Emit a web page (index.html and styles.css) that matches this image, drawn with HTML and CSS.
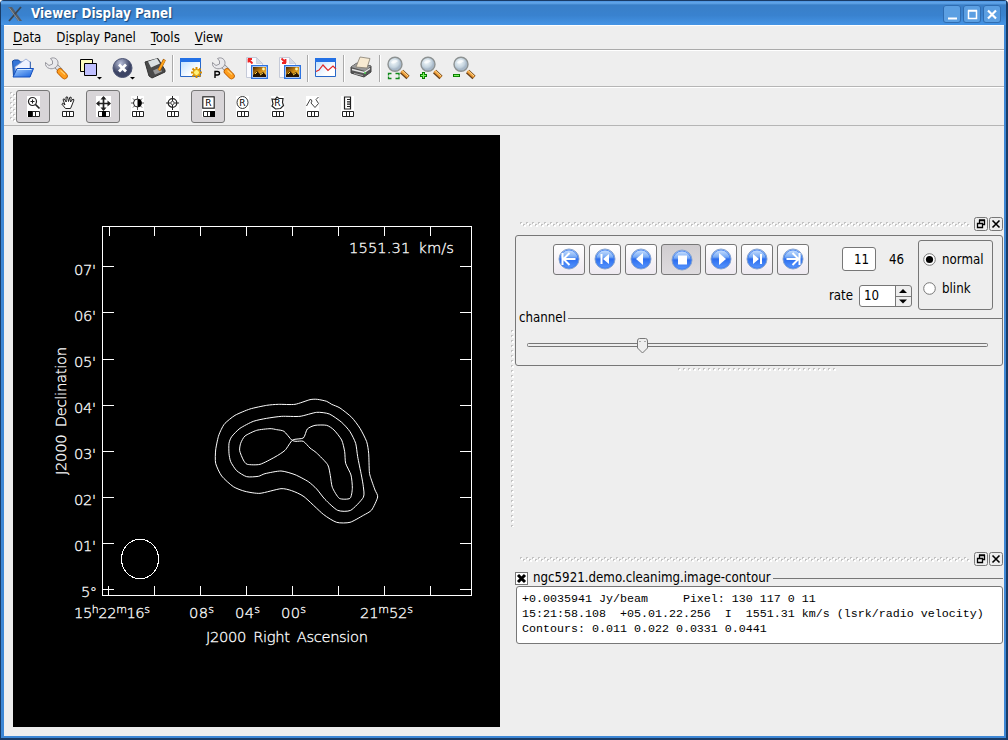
FILE: index.html
```html
<!DOCTYPE html>
<html lang="en">
<head>
<meta charset="utf-8">
<title>Viewer Display Panel</title>
<link rel="stylesheet" href="styles.css">
</head>
<body>
<svg class="defs" width="0" height="0">
  <defs>
    <linearGradient id="blue" x1="0" y1="0" x2="0" y2="1"><stop offset="0" stop-color="#d5e8ff"/><stop offset=".4" stop-color="#78aaf5"/><stop offset=".5" stop-color="#2b6cee"/><stop offset="1" stop-color="#5c9aff"/></linearGradient>
    <linearGradient id="folder" x1="0" y1="0" x2="1" y2="1"><stop offset="0" stop-color="#a5d0ff"/><stop offset="1" stop-color="#1560dd"/></linearGradient>
    <linearGradient id="sheet" x1="0" y1="0" x2="1" y2="1"><stop offset="0" stop-color="#b8dcff"/><stop offset=".7" stop-color="#fff"/></linearGradient>
    <linearGradient id="photo" x1="0" y1="0" x2="1" y2="1"><stop offset="0" stop-color="#4a2500"/><stop offset=".5" stop-color="#d08a10"/><stop offset="1" stop-color="#ffd050"/></linearGradient>
    <radialGradient id="glass" cx=".4" cy=".35"><stop offset="0" stop-color="#f4fafc"/><stop offset=".75" stop-color="#c4d3de"/><stop offset="1" stop-color="#a8b8c8"/></radialGradient>
    <radialGradient id="slate" cx=".4" cy=".25"><stop offset="0" stop-color="#b9c0da"/><stop offset="1" stop-color="#3d4565"/></radialGradient>
    <symbol id="wrench" viewBox="0 0 33 34">
      <path d="M14 13 L21 20" stroke="#888" stroke-width="5"/>
      <path d="M14 13 L21 20" stroke="#e2e2e6" stroke-width="3.400"/>
      <path d="M10.500 7.500 c4-2 8 1 7.500 5 c-.5 4-5 6-8.500 5 c-3-.8-4.500-3-4-6 l3.500 3 l3.500-1.500 v-3z" fill="#e9e9ec" stroke="#8d8d95" stroke-width=".9"/>
      <path d="M20 20.500 L24.500 25" stroke="#b85b00" stroke-width="6.500" stroke-linecap="round"/>
      <path d="M20 20.500 L24.500 25" stroke="#ff9d1c" stroke-width="5" stroke-linecap="round"/>
      <path d="M20.500 19.500 L25 23.500" stroke="#ffd070" stroke-width="1.200"/>
    </symbol>
    <symbol id="lens" viewBox="0 0 33 34">
      <path d="M20.500 20.500 L27 26.500" stroke="#684018" stroke-width="4.600"/>
      <path d="M20.500 20 L27 26" stroke="#ee9c38" stroke-width="2.800"/>
      <path d="M21 19.500 L27 25" stroke="#ffdf98" stroke-width="1"/>
      <circle cx="14" cy="13.300" r="7" fill="url(#glass)" stroke="#8d9292" stroke-width="1.400"/>
      <path d="M10 12 c1-3 5-4 7-2 c-2 2-5 3-7 2z" fill="#fff" opacity=".7"/>
    </symbol>
    <symbol id="picture" viewBox="0 0 33 34">
      <path d="M6.500 6.500 h10 l6 6 v14 h-16z" fill="#fbfbff" stroke="#c5cad8"/>
      <path d="M16.500 6.500 v6 h6z" fill="#d6dbe7" stroke="#bfc4d0" stroke-width=".6"/>
      <rect x="11.700" y="14.700" width="15.600" height="12.600" fill="#fff" stroke="#2d73e0" stroke-width="1.400"/>
      <rect x="13" y="16" width="13" height="10" fill="url(#photo)"/>
      <path d="M13 24 l4-4 l3 3 l3-2 l3 3 v2 h-13z" fill="#281500"/><path d="M15 23 l2-2 M20 24 l3-2" stroke="#ffd84c"/>
      <circle cx="23.500" cy="18" r="1.400" fill="#fff8b0"/>
    </symbol>
    <symbol id="cells" viewBox="0 0 12 6"><path d="M.5 .5 h11 v5 h-11z M4.500 .5 v5 M7.500 .5 v5" fill="#fff" stroke="#222"/></symbol>
    <symbol id="ball" viewBox="0 0 22 22"><circle cx="11" cy="11" r="10" fill="url(#blue)" stroke="#89a4cd"/><circle cx="11" cy="11" r="9" fill="none" stroke="#3f7df0" stroke-width=".8"/></symbol>
    <symbol id="undock" viewBox="0 0 14 14"><rect x=".5" y=".5" width="13" height="13" rx="2" fill="#eee" stroke="#777"/><path d="M5.500 6 V3.500 h5 v4 H8.500 M5 3 h6 M3.500 6.500 h5 v4 h-5z M3 6.500 h6" fill="none" stroke="#000" stroke-width="1.300"/></symbol>
    <symbol id="shut" viewBox="0 0 14 14"><rect x=".5" y=".5" width="13" height="13" rx="2" fill="#eee" stroke="#777"/><path d="M3.500 3.500 l7 7 m0-7 l-7 7" stroke="#000" stroke-width="1.600"/></symbol>
    <pattern id="dots" width="6" height="5" patternUnits="userSpaceOnUse"><path d="M0 0h2v2h-2z M3 2h2v2h-2z" fill="#c3c3c3"/><path d="M1 1h2v2h-2z M4 3h2v2h-2z" fill="#fff"/></pattern>
    <pattern id="beads" width="5" height="5" patternUnits="userSpaceOnUse"><path d="M0 0h2v2h-2z" fill="#c3c3c3"/><path d="M1 1h2v2h-2z" fill="#fff"/></pattern>
  </defs>
</svg>
<div class="window">
  <header class="titlebar">
    <svg class="logo" width="16" height="16"><path d="M1 1 h4 l10 14 h-4z" fill="#555d68"/><path d="M14 1 L2 15" stroke="#3d4651" stroke-width="1.800"/><path d="M2 1.500 L12 15" stroke="#9aa2a5" stroke-width=".8"/></svg>
    <h1>Viewer Display Panel</h1>
    <div class="winbuttons">
      <svg width="18" height="18"><path d="M5 13.500 h9" stroke="#fff" stroke-width="2"/></svg>
      <svg width="18" height="18"><path d="M5.500 6 h8 v7.500 h-8z M5 5.500 h9" fill="none" stroke="#fff" stroke-width="1.500"/></svg>
      <svg width="18" height="18"><path d="M5 5.500 l8 8 m0-8 l-8 8" stroke="#fff" stroke-width="2.200"/></svg>
    </div>
  </header>
  <div class="client">
    <nav class="menubar"><span><u>D</u>ata</span><span>D<u>i</u>splay Panel</span><span><u>T</u>ools</span><span><u>V</u>iew</span></nav>

    <div class="toolbar main-tools">
      <svg width="33" height="34" viewBox="7 51 33 34"><path d="M12.500 61 l2-1 h4 l2 2 h10 v14 h-17z" fill="#3676d8" stroke="#174ba3"/><path d="M15 67 l11-8 l4 3 v10 h-14z" fill="#eef2ff" stroke="#92a4d0" stroke-width=".8"/><path d="M17 68.500 h16.500 l-3.500 8.500 h-17z" fill="url(#folder)" stroke="#1550bf"/><path d="M17.500 69.500 h14" stroke="#d8edff"/></svg>
      <svg width="33" height="34"><use href="#wrench" width="33" height="34"/></svg>
      <svg width="33" height="34" viewBox="73 51 33 34"><path d="M80.500 59.500 h12 v12 h-12z" fill="#ffffc0" stroke="#000"/><path d="M84.500 63.500 h12 v12 h-12z" fill="#c0c0ff" stroke="#000"/><path d="M97 77 h5 l-2.500 2.500z"/></svg>
      <svg width="33" height="34" viewBox="106 51 33 34"><circle cx="122.500" cy="68" r="9.500" fill="url(#slate)" stroke="#4c5474"/><path d="M119 64.500 l7 7 m0-7 l-7 7" stroke="#fff" stroke-width="2.800"/><path d="M130 77 h5 l-2.500 2.500z"/></svg>
      <svg width="33" height="34" viewBox="139 51 33 34"><path d="M145 62 l13-3.500 l7 11.500 v2 l-13 6 l-3-2z" fill="#4a4a4a" stroke="#333"/><path d="M148 61.500 l9-3 l3 5 l-9 4z" fill="#d9dfe2"/><path d="M153 70.500 l7-3 l2 4 l-7 3z" fill="#999"/><path d="M164.500 59.500 l-5.500 11" stroke="#9c5300" stroke-width="3"/><path d="M164.500 60 l-5.500 10" stroke="#ffa51c" stroke-width="2"/></svg>
      <i class="sep first"></i>
      <svg width="33" height="34" viewBox="174 51 33 34"><path d="M180.500 58.500 h20 v18 h-20z" fill="url(#sheet)" stroke="#2767c8"/><path d="M180 58 h21 v4 h-21z" fill="#2471e5"/><path d="M196.500 67 v11 M191 72.500 h11 M192.500 68.500 l8 8 m0-8 l-8 8" stroke="#d88d00" stroke-width="2"/><circle cx="196.500" cy="72.500" r="3" fill="#fff27a" stroke="#e09b00"/></svg>
      <svg width="33" height="34"><use href="#wrench" width="33" height="34"/><path d="M8 27 v-6.500 h2.500 q2 0 2 1.800 q0 1.700-2 1.700 h-2" fill="none" stroke="#000" stroke-width="1.400"/></svg>
      <svg width="33" height="34"><use href="#picture" width="33" height="34"/><path d="M8 8 h4 M8.500 7.500 v4 M8.500 8.500 l4 4" stroke="#e22" stroke-width="1.800"/></svg>
      <svg width="33" height="34"><use href="#picture" width="33" height="34"/><path d="M8.500 7.500 l4 4 M9 12 h4 M12.500 8 v4" stroke="#e22" stroke-width="1.800"/></svg>
      <i class="sep"></i>
      <svg width="33" height="34" viewBox="309 51 33 34"><path d="M315.500 58.500 h20 v18 h-20z" fill="url(#sheet)" stroke="#2767c8"/><path d="M315 58 h21 v4 h-21z" fill="#2471e5"/><path d="M316 71.500 l3-1.500 l4-5 l5 5.500 l5-4.500 l3 3" fill="none" stroke="#e02828" stroke-width="1.200"/></svg>
      <i class="sep"></i>
      <svg width="33" height="34" viewBox="345 51 33 34"><path d="M351 67 l6-4 l14 3 v6 l-7 5 l-13-4z" fill="#555" stroke="#444"/><path d="M351 67 l6-4 l14 3 l-6 5z" fill="#999"/><path d="M356 67 l4-10 l10 1.500 l-3 9.500z" fill="#f7ead2" stroke="#857e70" stroke-width=".8"/><path d="M352 69.500 l12 3 l6-4" fill="none" stroke="#e6e6e6" stroke-width="1.500"/><path d="M354 73.500 l9 2" stroke="#aaa"/><circle cx="365" cy="73" r=".9" fill="#48da50"/></svg>
      <i class="sep"></i>
      <svg width="33" height="34"><use href="#lens" width="33" height="34"/><path d="M7.500 24.500 v-2 h3 M14.500 22.500 h3.500 v2 M7.500 25.500 v2 h3 M14.500 27.500 h3.500 v-2" fill="none" stroke="#128a1c" stroke-width="1.300"/></svg>
      <svg width="33" height="34"><use href="#lens" width="33" height="34"/><path d="M9.500 21 v7 M6 24.500 h7" stroke="#087a00" stroke-width="3"/><path d="M9.500 22 v5 M7 24.500 h5" stroke="#7cf45e" stroke-width="1.200"/></svg>
      <svg width="33" height="34"><use href="#lens" width="33" height="34"/><path d="M6 24.500 h7" stroke="#087a00" stroke-width="3"/><path d="M7 24.500 h5" stroke="#7cf45e" stroke-width="1.200"/></svg>
    </div>

    <div class="toolbar mouse-tools">
      <svg class="grip" width="6" height="30"><rect width="6" height="30" fill="url(#dots)"/></svg>
      <span class="tool on"><svg width="14" height="21"><rect width="13" height="21" fill="#fff"/><circle cx="5.500" cy="5.500" r="4" fill="none" stroke="#222" stroke-width="1.200"/><path d="M3.500 5.500 h4 M5.500 3.500 v4" stroke="#222"/><path d="M8.500 8.500 l4 4" stroke="#222" stroke-width="1.700"/><use href="#cells" x="1" y="15" width="12" height="6"/><path d="M1 15 h4 v6 h-4z"/></svg></span>
      <span class="tool"><svg width="14" height="21"><path d="M4.500 12.500 L.8 8 l1-.8 L4 9 L2 3.500 l1.200-.7 l2 3.200 L5 1 h1.500 l1 4.500 L9 1 l1.300 .5 l-.8 4.500 l2.500-3 l1 .8 L11 9 l-1.500 3.500z" fill="#fff" stroke="#222"/><use href="#cells" x="1" y="15" width="12" height="6"/></svg></span>
      <span class="tool on"><svg width="15" height="21"><rect width="15" height="21" fill="#fff"/><path d="M7.500 1 v13 M1 7.500 h13" stroke="#222" stroke-width="1.700"/><path d="M7.500 0 l3 3.500 h-6z M7.500 15 l3-3.500 h-6z M0 7.500 l3.500-3 v6z M15 7.500 l-3.500-3 v6z" fill="#222"/><use href="#cells" x="2" y="15" width="12" height="6"/><path d="M6 15 h4 v6 h-4z"/></svg></span>
      <span class="tool"><svg width="14" height="21"><rect width="13" height="21" fill="#fff"/><path d="M6.500 0 v14 M0 7 h13 M2 2.500 l9 9 m0-9 l-9 9" stroke="#444" stroke-width=".9"/><circle cx="6.500" cy="7" r="4" fill="#fff" stroke="#222"/><path d="M6.500 3 a4 4 0 0 1 0 8z"/><use href="#cells" x="1" y="15" width="12" height="6"/></svg></span>
      <span class="tool"><svg width="14" height="21"><rect width="13" height="21" fill="#fff"/><circle cx="6.500" cy="7" r="4.300" fill="none" stroke="#222" stroke-width="1.200"/><circle cx="6.500" cy="7" r="1.700" fill="none" stroke="#444"/><path d="M6.500 0 v5 M6.500 9 v5 M0 7 h4.500 M8.500 7 h4.500" stroke="#222"/><use href="#cells" x="1" y="15" width="12" height="6"/></svg></span>
      <span class="tool on"><svg width="13" height="21"><rect width="13" height="21" fill="#fff"/><rect x=".8" y=".8" width="11.400" height="11.400" fill="none" stroke="#222" stroke-width="1.200"/><text class="mark" x="6.500" y="10">R</text><use href="#cells" x="1" y="15" width="12" height="6"/><path d="M8 15 h5 v6 h-5z"/></svg></span>
      <span class="tool"><svg width="14" height="21"><rect width="13" height="21" fill="#fff"/><ellipse cx="6.500" cy="6.500" rx="5.500" ry="6" fill="none" stroke="#333"/><text class="mark" x="6.500" y="10">R</text><use href="#cells" x="1" y="15" width="12" height="6"/></svg></span>
      <span class="tool"><svg width="14" height="21"><rect width="13" height="21" fill="#fff"/><path d="M1 3 l3 .3 l2-2.300 l2 1.500 h4 l-.5 4 l1 3 l-3 3 l-5 .5 l-3.500-3 l1-2z" fill="none" stroke="#222" stroke-width="1.200"/><text class="mark" x="6.500" y="10">R</text><use href="#cells" x="1" y="15" width="12" height="6"/></svg></span>
      <span class="tool"><svg width="14" height="21"><rect width="13" height="21" fill="#fff"/><path d="M.5 10 l4-7 l1.500 2 l-1 2 l4 4.500 l3.500-4 l-2.500-4 l2.500-2.500" fill="none" stroke="#444"/><use href="#cells" x="1" y="15" width="12" height="6"/></svg></span>
      <span class="tool"><svg width="14" height="21"><rect width="13" height="21" fill="#fff"/><path d="M3.500 1 h6 v12 h-6z M6 3.500 h3 M6 5.800 h3 M6 8.200 h3 M6 10.500 h3" fill="none" stroke="#222" stroke-width="1.200"/><use href="#cells" x="1" y="15" width="12" height="6"/></svg></span>
    </div>

    <main class="workspace">
      <svg class="plot" width="487" height="592" viewBox="13 135 487 592">
        <g class="axes">
          <path d="M102.500 226.500 H471.500 V595.500 H102.500z"/>
          <path d="M109.500 227v9 M154.500 227v9 M200.500 227v9 M246.500 227v9 M292.500 227v9 M338.500 227v9 M384.500 227v9 M430.500 227v9"/>
          <path d="M108.500 586v9 M154.500 586v9 M200.500 586v9 M246.500 586v9 M292.500 586v9 M338.500 586v9 M384.500 586v9 M430.500 586v9"/>
          <path d="M103 266.500h11 M103 312.500h11 M103 359.500h11 M103 405.500h11 M103 451.500h11 M103 497.500h11 M103 543.500h11 M103 589.500h11"/>
          <path d="M460 266.500h11 M460 312.500h11 M460 359.500h11 M460 405.500h11 M460 451.500h11 M460 497.500h11 M460 543.500h11 M460 589.500h11"/>
          <ellipse cx="140" cy="559" rx="18.500" ry="19.700"/>
        </g>
        <g class="contours" id="contours" transform="translate(200 380) scale(.33333)"></g>
        <g class="labels">
          <text x="349" y="253" textLength="105">1551.31 km/s</text>
          <text x="74" y="275" textLength="22">07'</text>
          <text x="74" y="321" textLength="22">06'</text>
          <text x="74" y="367" textLength="22">05'</text>
          <text x="74" y="413" textLength="22">04'</text>
          <text x="74" y="459" textLength="22">03'</text>
          <text x="74" y="505" textLength="22">02'</text>
          <text x="74" y="551" textLength="22">01'</text>
          <text x="81" y="597" textLength="16">5°</text>
          <text x="74" y="618" textLength="76">15<tspan class="sup" dy="-5">h</tspan><tspan dy="5">22</tspan><tspan class="sup" dy="-5">m</tspan><tspan dy="5">16</tspan><tspan class="sup" dy="-5">s</tspan></text>
          <text x="189" y="618" textLength="25">08<tspan class="sup" dy="-5">s</tspan></text>
          <text x="235" y="618" textLength="25">04<tspan class="sup" dy="-5">s</tspan></text>
          <text x="281" y="618" textLength="25">00<tspan class="sup" dy="-5">s</tspan></text>
          <text x="360" y="618" textLength="53">21<tspan class="sup" dy="-5">m</tspan><tspan dy="5">52</tspan><tspan class="sup" dy="-5">s</tspan></text>
          <text x="206" y="642" textLength="162">J2000 Right Ascension</text>
          <text transform="translate(66 475) rotate(-90)" textLength="128">J2000 Declination</text>
        </g>
      </svg>
      <svg class="vsplit" width="5" height="197"><rect width="5" height="197" fill="url(#beads)"/></svg>

      <section class="docks">
        <div class="dockhead"><svg width="450" height="5"><rect width="450" height="5" fill="url(#dots)"/></svg><svg width="14" height="14"><use href="#undock" width="14" height="14"/></svg><svg width="14" height="14"><use href="#shut" width="14" height="14"/></svg></div>
        <div class="animator">
          <div class="controls">
            <div class="player">
              <button><svg width="22" height="22"><use href="#ball"/><path d="M5.500 11 H17.500 M11.500 5 L5.500 11 l6 6 M4.500 5 v12" fill="none" stroke="#fff" stroke-width="2"/></svg></button>
              <button><svg width="22" height="22"><use href="#ball"/><path d="M6.500 6 h2 v10 h-2z M15 6 v10 l-6-5z" fill="#fff"/></svg></button>
              <button><svg width="22" height="22"><use href="#ball"/><path d="M13 5 v12 l-7-6z" fill="#fff"/></svg></button>
              <button class="stop"><svg width="22" height="22"><use href="#ball"/><path d="M7 6.500 h9 v9 h-9z" fill="#fff"/></svg></button>
              <button><svg width="22" height="22"><use href="#ball"/><path d="M9 5 v12 l7-6z" fill="#fff"/></svg></button>
              <button><svg width="22" height="22"><use href="#ball"/><path d="M14 6 h2 v10 h-2z M7 6 v10 l6-5z" fill="#fff"/></svg></button>
              <button><svg width="22" height="22"><use href="#ball"/><path d="M4.500 11 H16.500 M10.500 5 l6 6 l-6 6 M17.500 5 v12" fill="none" stroke="#fff" stroke-width="2"/></svg></button>
            </div>
            <div class="numbers">
              <div class="frame"><span class="field">11</span><span>46</span></div>
              <div class="rate"><span>rate</span><span class="spin"><b>10</b><svg width="16" height="20"><path d="M.5 0 v20 M1 10.500 h15" stroke="#777"/><path d="M4 7 h8 l-4-4z M4 13.500 h8 l-4 4z"/></svg></span></div>
            </div>
            <div class="mode">
              <label><svg width="13" height="13"><circle cx="6.500" cy="6.500" r="5.800" fill="#fff" stroke="#777"/><circle cx="6.500" cy="6.500" r="3.600"/></svg><span>normal</span></label>
              <label><svg width="13" height="13"><circle cx="6.500" cy="6.500" r="5.800" fill="#fff" stroke="#777"/></svg><span>blink</span></label>
            </div>
          </div>
          <div class="caption"><span>channel</span><i></i></div>
          <svg class="slider" width="461" height="16"><rect x=".5" y="5.500" width="460" height="3" rx="1" fill="#eee" stroke="#777"/><path d="M110.500 3 q0-2.500 2-2.500 h6 q2 0 2 2.500 v7 l-5 5 l-5-5z" fill="#eee" stroke="#777"/><path d="M112 3.500 h2 M117 3.500 h2" stroke="#aaa"/></svg>
        </div>
        <svg class="hsplit" width="158" height="4"><rect width="158" height="4" fill="url(#beads)"/></svg>
        <div class="dockhead lower"><svg width="450" height="5"><rect width="450" height="5" fill="url(#dots)"/></svg><svg width="14" height="14"><use href="#undock" width="14" height="14"/></svg><svg width="14" height="14"><use href="#shut" width="14" height="14"/></svg></div>
        <div class="caption image"><svg width="13" height="13"><rect x=".5" y=".5" width="12" height="12" fill="#fff" stroke="#777"/><path d="M3 3 l7 7 m0-7 l-7 7" stroke="#000" stroke-width="3"/></svg><span>ngc5921.demo.cleanimg.image-contour</span><i></i></div>
        <pre class="readout">+0.0035941 Jy/beam     Pixel: 130 117 0 11
15:21:58.108  +05.01.22.256  I  1551.31 km/s (lsrk/radio velocity)
Contours: 0.011 0.022 0.0331 0.0441</pre>
      </section>
    </main>
  </div>
</div>
<script src="contours.js"></script>
</body>
</html>
```
FILE: contours.js
```js
// Closed contour levels, drawn as Catmull-Rom splines through the sampled points.
const levels = [
  [47,210, 55,170, 64,148, 75,130, 105,106, 150,87, 200,76, 235,73, 285,73, 330,59, 352,58, 380,64, 395,73, 420,84, 455,112, 480,145, 500,185, 506,220, 508,275, 512,293, 525,330, 533,351, 515,390, 490,406, 450,427, 410,427, 370,403, 312,350, 275,332, 243,326, 180,340, 135,334, 100,320, 65,288, 47,250],
  [87,190, 95,170, 120,145, 160,124, 200,115, 245,109, 300,109, 350,97, 388,102, 425,127, 450,155, 467,190, 473,230, 484,285, 490,320, 490,352, 452,391, 413,391, 375,358, 350,327, 325,305, 285,284, 243,273, 195,281, 175,289, 140,290, 110,272, 92,245, 87,220],
  [278,180, 310,174, 322,147, 345,136, 380,136, 402,150, 425,180, 434,215, 437,250, 453,285, 457,325, 450,355, 418,355, 397,322, 391,287, 383,254, 350,219, 330,204, 310,184, 288,184, 275,180, 252,154, 230,149, 210,146, 170,151, 135,168, 122,190, 119,212, 130,240, 142,253, 180,253, 225,231, 255,211]
];
const layer = document.getElementById('contours');
for (const flat of levels) {
  const n = flat.length / 2;
  const at = i => { const k = (i + n) % n; return [flat[2 * k], flat[2 * k + 1]]; };
  let d = 'M' + at(0);
  for (let i = 0; i < n; i++) {
    const [a, b, c, e] = [at(i - 1), at(i), at(i + 1), at(i + 2)];
    d += `C${b[0] + (c[0] - a[0]) / 9} ${b[1] + (c[1] - a[1]) / 9} ${c[0] - (e[0] - b[0]) / 9} ${c[1] - (e[1] - b[1]) / 9} ${c}`;
  }
  const path = document.createElementNS('http://www.w3.org/2000/svg', 'path');
  path.setAttribute('d', d + 'z');
  layer.appendChild(path);
}
```
FILE: styles.css
```css
* { box-sizing: border-box; }
body { margin: 0; font: 13.2px/16px "DejaVu Sans Condensed", "DejaVu Sans", sans-serif; font-stretch: condensed; color: #000; }
svg { display: block; flex: none; }
.defs { position: absolute; }
.window { width: 1008px; height: 740px; display: flex; flex-direction: column; background: #3d87d5; border: 1px solid #193b66; border-bottom-width: 2px; border-right-width: 2px; border-radius: 4px 4px 0 0; padding: 0 2px 2px 3px; }
.titlebar { height: 24px; flex: none; display: flex; align-items: center; padding: 2px 2px 0 6px; background: linear-gradient(#4b93df 0, #65a8eb 2px, #397fc8 4px, #3982cf 60%, #4594e5); margin: 0 -2px 0 -3px; }
.titlebar h1 { margin: 0 0 0 8px; font-size: 13.3px; line-height: 18px; font-weight: bold; color: #fff; text-shadow: 1px 1px 1px #174477; flex: 1; white-space: nowrap; }
.winbuttons { display: flex; gap: 2px; padding-right: 3px; }
.winbuttons svg { background: #5b9fe2; box-shadow: inset 0 0 0 1px #2f6db2; border-radius: 3px; }
.client { flex: 1; min-height: 0; background: #eee; display: flex; flex-direction: column; }
.menubar { height: 25px; display: flex; gap: 15px; align-items: center; padding: 1px 0 0 9px; border-top: 1px solid #fff; border-bottom: 1px solid #aaa; }
.menubar u { text-underline-offset: 2px; text-decoration-thickness: 1px; }
.toolbar { display: flex; border-top: 1px solid #fff; border-bottom: 1px solid #b5b5b5; }
.main-tools { height: 37px; padding-left: 3px; }
.sep { width: 3px; margin: 4px 0; background: linear-gradient(90deg, transparent 1px, #aaa 1px, #aaa 2px, #fff 2px); }
.sep.first { width: 2px; background: linear-gradient(90deg, #aaa 1px, #fff 1px); }
.mouse-tools { height: 39px; align-items: center; gap: 1px; padding-left: 6px; }
.grip { margin-right: -1px; }
.tool { width: 34px; height: 33px; display: flex; align-items: center; justify-content: center; border: 1px solid transparent; border-radius: 3px; padding-bottom: 1px; }
.tool.on { border-color: #777; background: #d8d5d8; padding-left: 1px; }
.mark { font: 9px "DejaVu Sans", sans-serif; text-anchor: middle; }
.workspace { flex: 1; min-height: 0; display: flex; }
.plot { margin: 9px 0 0 9px; background: #000; }
.axes, .contours { fill: none; stroke: #fff; stroke-width: 1; shape-rendering: crispEdges; }
.contours { stroke-width: 3; stroke-linejoin: round; }
.labels { fill: #fff; stroke: #fff; stroke-width: .3px; font: 200 14.7px "DejaVu Sans", sans-serif; word-spacing: 3px; }
.sup { font-size: 11px; }
.vsplit { margin: 204px 0 0 11px; }
.docks { width: 488px; flex: none; margin-left: -1px; padding-top: 91px; display: flex; flex-direction: column; }
.dockhead { display: flex; align-items: center; padding-left: 5px; height: 14px; flex: none; }
.dockhead svg:nth-child(2) { margin: 0 1px 0 4px; }
.animator { height: 131px; flex: none; margin-top: 4px; border: 1px solid #777; border-radius: 3px; }
.controls { display: flex; height: 73px; padding-top: 4px; }
.player { display: flex; gap: 4px; padding: 4px 0 0 37px; width: 294px; flex: none; }
button { width: 32px; height: 31px; flex: none; padding: 0 0 1px; display: flex; align-items: center; justify-content: center; border: 1px solid #777; border-radius: 3px; background: linear-gradient(#fff, #eee9f0); }
button.stop { width: 40px; background: linear-gradient(#d0cdd0, #dedbde); padding: 1px 0 0 2px; }
.numbers { width: 102px; flex: none; }
.frame { display: flex; align-items: center; padding: 7px 0 0 32px; gap: 13px; }
.frame span { padding-top: 2px; }
.frame .field { width: 34px; height: 24px; border: 1px solid #777; border-radius: 3px; background: #fff; text-align: right; padding: 4px 6px 0; }
.rate { display: flex; align-items: center; justify-content: flex-end; gap: 6px; margin-top: 14px; }
.spin { width: 53px; height: 22px; border: 1px solid #777; border-radius: 3px; background: linear-gradient(90deg, #fff 35px, #eee 35px); display: flex; justify-content: space-between; padding: 0 0 0 4px; }
.spin b { font-weight: normal; line-height: 20px; }
.mode { width: 75px; height: 70px; flex: none; margin-left: 6px; border: 1px solid #777; border-radius: 3px; padding: 11px 0 0 4px; display: flex; flex-direction: column; gap: 13px; }
.mode label { display: flex; align-items: center; gap: 6px; }
.mode svg { margin-top: -1px; }
.caption { display: flex; align-items: center; gap: 2px; padding: 1px 0 0 3px; }
.caption i { flex: 1; height: 1px; background: #777; }
.slider { margin: 12px 0 0 11px; }
.hsplit { margin: 2px 0 0 163px; }
.lower { margin-top: 180px; }
.caption.image { padding: 0; margin-top: 4px; }
.caption.image span { margin-left: 3px; white-space: nowrap; }
.readout { margin: 0 0 0 1px; height: 58px; width: 487px; border: 1px solid #777; border-radius: 3px; background: #fff; padding: 5px; font: 11.667px/15px "Liberation Mono", monospace; }
```
